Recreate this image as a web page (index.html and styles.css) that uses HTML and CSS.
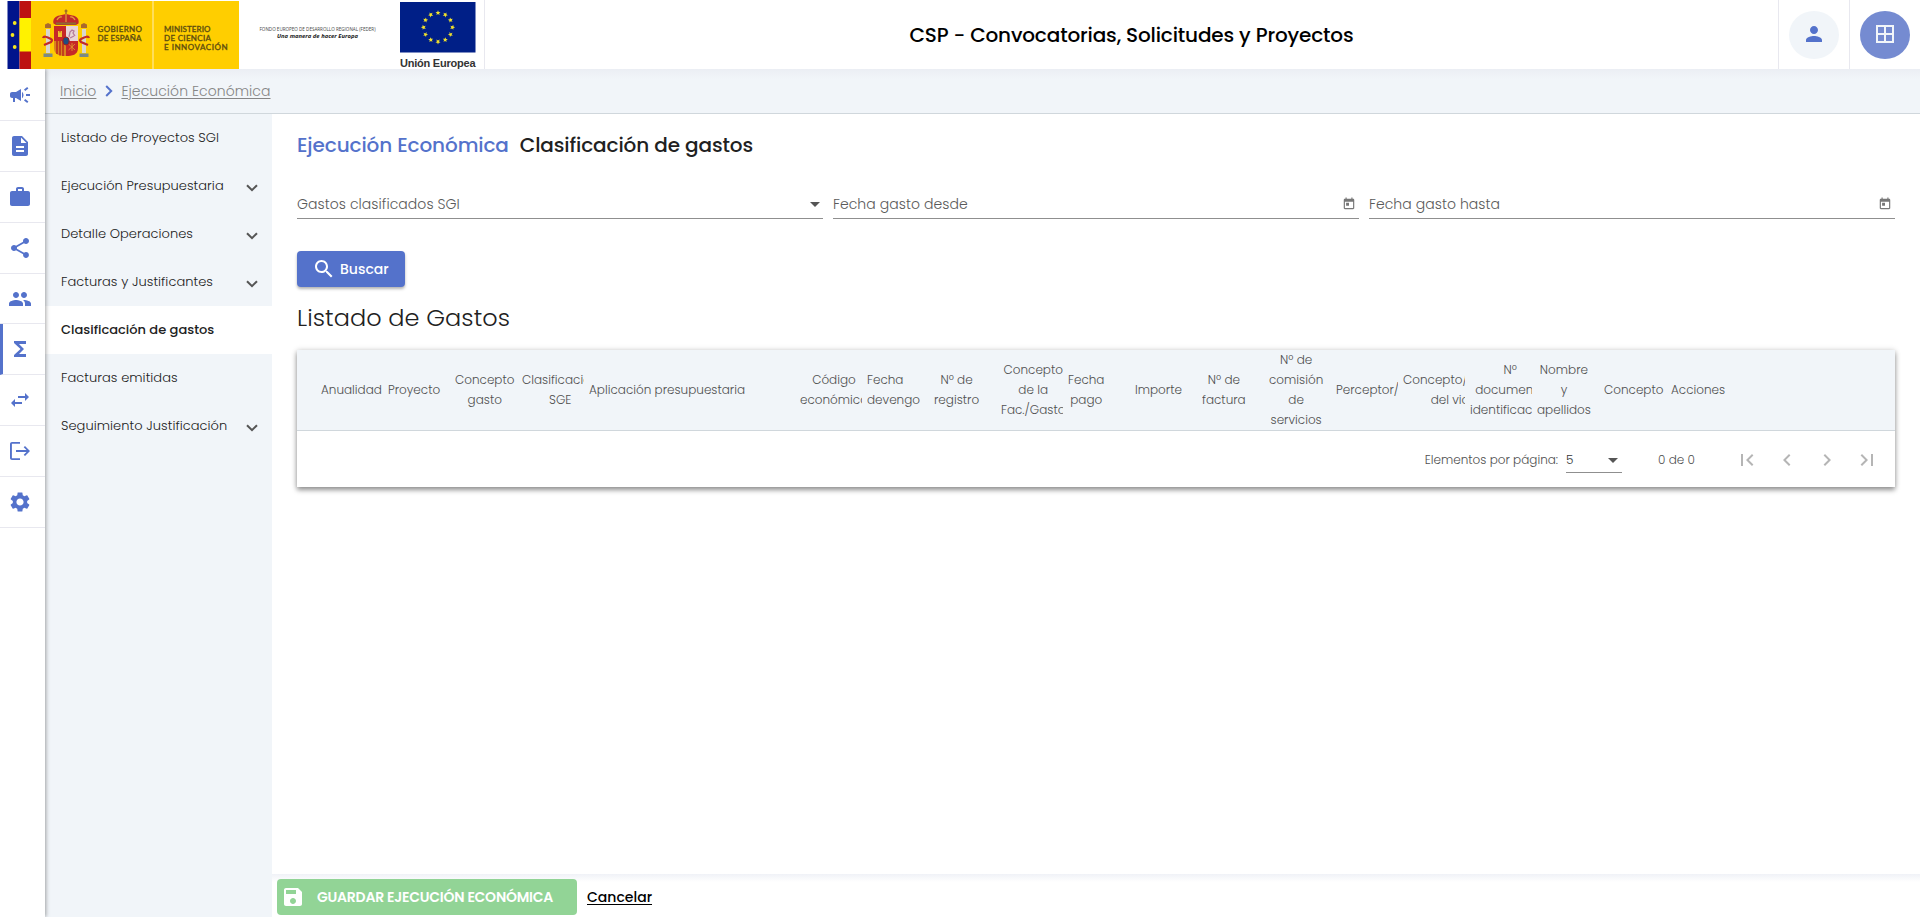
FILE: index.html
```html
<!DOCTYPE html>
<html lang="es">
<head>
<meta charset="utf-8">
<title>CSP - Convocatorias, Solicitudes y Proyectos</title>
<link rel="stylesheet" href="styles.css">
</head>
<body>
<header class="topbar">
  <div class="logos">
    <svg class="logo-strip" width="484" height="70" viewBox="0 0 484 70">
      <rect x="7.500" y="1" width="12" height="68" fill="#00148c"/>
      <rect x="19.500" y="1" width="12" height="68" fill="#bd1212"/>
      <rect x="19.500" y="18" width="12" height="33.500" fill="#fff200"/>
      <rect x="31" y="1" width="208" height="68" fill="#ffce00"/>
      <rect x="152.300" y="1" width="1.400" height="68" fill="#ffe680"/>
      <g fill="#f5e61e"><circle cx="14.700" cy="23" r="1.900"/><circle cx="12.500" cy="35" r="1.900"/><circle cx="14.700" cy="47" r="1.900"/></g>
      <g>
        <path d="M53.500 23.500c-1-4 1.500-7.500 6-8l6.500-1.500 6.500 1.500c4.500.5 7 4 6 8l-2.500 1.500h-20z" fill="#c22a2a"/>
        <path d="M57 20q2-4 5-3M75 20q-2-4-5-3M66 14v8" stroke="#e2a13b" stroke-width="1.200" fill="none"/>
        <path d="M56 23.500h20" stroke="#8d6a35" stroke-width="2"/>
        <path d="M66 9.500v4.500M64.500 11h3" stroke="#8d5530" stroke-width="1.200"/>
        <path d="M54 26h12v15H54z" fill="#c62828"/><path d="M66 26h12v15H66z" fill="#e8d5d8"/>
        <path d="M54 41h12v15c-6 0-12-1-12-8z" fill="#d8841f"/><path d="M66 41h12v7c0 7-6 8-12 8z" fill="#c62828"/>
        <path d="M57 41v13M60 41v14.500M63 41v15" stroke="#b71c1c" stroke-width="1.300"/>
        <path d="M58 37v-6h1.500v1.500h1V31H62v6z" fill="#f0c02e"/>
        <path d="M69 37l1-5 2-2 2 1-1 2 2 3M70 38l4-2" stroke="#b57a9a" stroke-width="1.300" fill="none"/>
        <path d="M68.500 44l6.500 6M75 44l-6.500 6M72 43v8" stroke="#e0a030" stroke-width=".8"/>
        <ellipse cx="66" cy="41" rx="3.200" ry="4" fill="#1f4d80" stroke="#a02020"/>
        <path d="M46 29h4v24h-4zM82 29h4v24h-4z" fill="#d8d6ce"/>
        <path d="M43.500 53.500h9V57h-9zM79.500 53.500h9V57h-9z" fill="#7b8a86"/>
        <path d="M45 28v-3.500l3-1.500 3 1.500V28zM81 28v-3.500l3-1.500 3 1.500V28z" fill="#a96a2e"/>
        <path d="M43 38q1-3 8 1 2 1 0 3l-7 3M89 38q-1-3-8 1-2 1 0 3l7 3" stroke="#c22a2a" stroke-width="2.200" fill="none"/>
      </g>
      <g class="logo-gov" fill="#5d4d10">
        <text x="97.500" y="31.500" textLength="44.500">GOBIERNO</text>
        <text x="97.500" y="41" textLength="44">DE ESPAÑA</text>
        <text x="164" y="31.500" textLength="46.500">MINISTERIO</text>
        <text x="164" y="41" textLength="47">DE CIENCIA</text>
        <text x="164" y="50" textLength="63.500">E INNOVACIÓN</text>
      </g>
      <text class="logo-feder" x="259.500" y="31" textLength="116" lengthAdjust="spacingAndGlyphs">FONDO EUROPEO DE DESARROLLO REGIONAL (FEDER)</text>
      <text class="logo-motto" x="277" y="38.300" textLength="81" lengthAdjust="spacingAndGlyphs">Una manera de hacer Europa</text>
      <rect x="400" y="2" width="75.500" height="50.500" fill="#001f87"/>
      <g fill="#f3e32b"><path id="st" d="M438 10.200l.7 1.700 1.800.1-1.400 1.200.5 1.800-1.600-1-1.600 1 .5-1.800-1.400-1.200 1.800-.1z"/>
      <use href="#st" transform="rotate(30 438 27.300)"/><use href="#st" transform="rotate(60 438 27.300)"/><use href="#st" transform="rotate(90 438 27.300)"/><use href="#st" transform="rotate(120 438 27.300)"/><use href="#st" transform="rotate(150 438 27.300)"/><use href="#st" transform="rotate(180 438 27.300)"/><use href="#st" transform="rotate(210 438 27.300)"/><use href="#st" transform="rotate(240 438 27.300)"/><use href="#st" transform="rotate(270 438 27.300)"/><use href="#st" transform="rotate(300 438 27.300)"/><use href="#st" transform="rotate(330 438 27.300)"/></g>
      <text class="logo-ue" x="400" y="66.500" textLength="75.500">Unión Europea</text>
    </svg>
  </div>
  <h1 class="app-title">CSP - Convocatorias, Solicitudes y Proyectos</h1>
  <div class="top-cell"><span class="round round-user"><svg class="i" viewBox="0 0 24 24"><path d="M12 12c2.210 0 4-1.790 4-4s-1.790-4-4-4-4 1.790-4 4 1.790 4 4 4zm0 2c-2.670 0-8 1.340-8 4v2h16v-2c0-2.660-5.330-4-8-4z"/></svg></span></div>
  <div class="top-cell"><span class="round round-apps"><svg class="i" viewBox="0 0 24 24"><path d="M3 3v18h18V3H3zm8 16H5v-6h6v6zm0-8H5V5h6v6zm8 8h-6v-6h6v6zm0-8h-6V5h6v6z"/></svg></span></div>
</header>
<div class="shell">
  <nav class="rail">
    <a><svg class="i" viewBox="0 0 24 24"><path d="M18 11v2h4v-2h-4zm-2 6.610c.96.710 2.210 1.650 3.200 2.390.4-.53.8-1.070 1.200-1.600-.99-.74-2.240-1.680-3.200-2.400-.4.540-.8 1.080-1.200 1.610zM20.400 5.600c-.4-.53-.8-1.070-1.200-1.600-.99.740-2.240 1.680-3.200 2.400.4.530.8 1.070 1.200 1.600.96-.72 2.210-1.650 3.200-2.400zM4 9c-1.100 0-2 .9-2 2v2c0 1.100.9 2 2 2h1v4h2v-4h1l5 3V6L8 9H4zm11.500 3c0-1.330-.58-2.530-1.500-3.350v6.690c.92-.81 1.500-2.010 1.500-3.340z"/></svg></a>
    <a><svg class="i" viewBox="0 0 24 24"><path d="M14 2H6c-1.100 0-1.990.9-1.990 2L4 20c0 1.100.89 2 1.990 2H18c1.100 0 2-.9 2-2V8l-6-6zm2 16H8v-2h8v2zm0-4H8v-2h8v2zm-3-5V3.500L18.500 9H13z"/></svg></a>
    <a><svg class="i" viewBox="0 0 24 24"><path d="M20 6h-4V4c0-1.110-.89-2-2-2h-4c-1.110 0-2 .89-2 2v2H4c-1.110 0-1.990.89-1.990 2L2 19c0 1.110.89 2 2 2h16c1.110 0 2-.89 2-2V8c0-1.110-.89-2-2-2zm-6 0h-4V4h4v2z"/></svg></a>
    <a><svg class="i" viewBox="0 0 24 24"><path d="M18 16.080c-.76 0-1.440.3-1.960.77L8.910 12.700c.05-.23.090-.46.090-.7s-.04-.47-.09-.7l7.050-4.110c.54.5 1.250.81 2.040.81 1.660 0 3-1.340 3-3s-1.340-3-3-3-3 1.340-3 3c0 .24.040.47.090.7L8.040 9.810C7.500 9.310 6.790 9 6 9c-1.660 0-3 1.340-3 3s1.340 3 3 3c.79 0 1.500-.31 2.040-.81l7.120 4.160c-.05.210-.08.430-.08.650 0 1.610 1.310 2.920 2.920 2.920s2.920-1.310 2.920-2.920-1.310-2.920-2.920-2.920z"/></svg></a>
    <a><svg class="i" viewBox="0 0 24 24"><path d="M16 11c1.660 0 2.990-1.340 2.990-3S17.660 5 16 5s-3 1.340-3 3 1.340 3 3 3zM8 11c1.660 0 2.990-1.340 2.990-3S9.660 5 8 5 5 6.340 5 8s1.340 3 3 3zM8 13c-2.330 0-7 1.170-7 3.500V19h14v-2.500C15 14.170 10.330 13 8 13zM16 13c-.29 0-.62.020-.97.050C16.190 13.890 17 15.020 17 16.500V19h6v-2.500c0-2.330-4.670-3.500-7-3.500z"/></svg></a>
    <a class="on"><svg class="i" viewBox="0 0 24 24"><path d="M18 4H6v2l6.500 6L6 18v2h12v-3h-7l5-5-5-5h7z"/></svg></a>
    <a><svg class="i" viewBox="0 0 24 24"><path d="M6.990 11L3 15l3.990 4v-3H14v-2H6.990v-3zM21 9l-3.990-4v3H10v2h7.010v3L21 9z"/></svg></a>
    <a><svg class="i" viewBox="0 0 24 24"><path d="M12 3v1.800H3.900v14.400H12V21H4c-1.100 0-2-.9-2-2V5c0-1.100.9-2 2-2zM17 7l-1.300 1.300 2.800 2.800H8v1.800h10.500l-2.800 2.800L17 17l5-5z"/></svg></a>
    <a><svg class="i" viewBox="0 0 24 24"><path d="M19.140 12.940c.04-.3.060-.61.060-.94 0-.32-.02-.64-.07-.94l2.030-1.580c.18-.14.230-.41.120-.61l-1.920-3.320c-.12-.22-.37-.29-.59-.22l-2.390.96c-.5-.38-1.030-.7-1.620-.94l-.36-2.540c-.04-.24-.24-.41-.48-.41h-3.840c-.24 0-.43.170-.47.410l-.36 2.540c-.59.240-1.130.570-1.620.94l-2.390-.96c-.22-.08-.47 0-.59.220L2.740 8.870c-.12.210-.08.470.12.610l2.030 1.580c-.05.300-.09.630-.09.940s.02.640.07.940l-2.030 1.580c-.18.140-.23.410-.12.610l1.920 3.320c.12.220.37.290.59.220l2.390-.96c.5.380 1.030.7 1.620.94l.36 2.540c.05.240.24.410.48.410h3.840c.24 0 .44-.17.470-.41l.36-2.540c.59-.24 1.130-.56 1.620-.94l2.390.96c.22.080.47 0 .59-.22l1.920-3.320c.12-.22.070-.47-.12-.61l-2.010-1.580zM12 15.600c-1.980 0-3.600-1.620-3.600-3.600s1.620-3.600 3.600-3.600 3.600 1.620 3.600 3.600-1.620 3.600-3.600 3.600z"/></svg></a>
  </nav>
  <div class="page">
    <div class="crumbs"><a>Inicio</a><svg class="crumb-sep" viewBox="0 0 8 12"><path d="M1.200 1l5 5-5 5"/></svg><a>Ejecución Económica</a></div>
    <div class="body">
      <aside class="side">
        <a>Listado de Proyectos SGI</a>
        <a>Ejecución Presupuestaria<svg class="chev" viewBox="0 0 12 8"><path d="M1 1.200l5 5 5-5"/></svg></a>
        <a>Detalle Operaciones<svg class="chev" viewBox="0 0 12 8"><path d="M1 1.200l5 5 5-5"/></svg></a>
        <a>Facturas y Justificantes<svg class="chev" viewBox="0 0 12 8"><path d="M1 1.200l5 5 5-5"/></svg></a>
        <a class="on">Clasificación de gastos</a>
        <a>Facturas emitidas</a>
        <a>Seguimiento Justificación<svg class="chev" viewBox="0 0 12 8"><path d="M1 1.200l5 5 5-5"/></svg></a>
      </aside>
      <main class="main">
        <section class="content">
          <h2 class="title"><span class="accent">Ejecución Económica</span><span>Clasificación de gastos</span></h2>
          <div class="filters">
            <div class="field"><span>Gastos clasificados SGI</span><i class="tri"></i></div>
            <div class="field"><span>Fecha gasto desde</span><svg class="cal" viewBox="0 0 24 24"><path d="M19 3h-1V1h-2v2H8V1H6v2H5c-1.110 0-1.990.9-1.990 2L3 19c0 1.100.89 2 2 2h14c1.100 0 2-.9 2-2V5c0-1.100-.9-2-2-2zm0 16H5V8h14v11zM7 10h5v5H7z"/></svg></div>
            <div class="field"><span>Fecha gasto hasta</span><svg class="cal" viewBox="0 0 24 24"><path d="M19 3h-1V1h-2v2H8V1H6v2H5c-1.110 0-1.990.9-1.990 2L3 19c0 1.100.89 2 2 2h14c1.100 0 2-.9 2-2V5c0-1.100-.9-2-2-2zm0 16H5V8h14v11zM7 10h5v5H7z"/></svg></div>
          </div>
          <button class="search"><svg class="i" viewBox="0 0 24 24"><path d="M15.500 14h-.79l-.28-.27C15.410 12.590 16 11.110 16 9.500 16 5.910 13.090 3 9.500 3S3 5.910 3 9.500 5.910 16 9.500 16c1.610 0 3.090-.59 4.230-1.570l.27.280v.79l5 4.990L20.490 19l-4.990-5zm-6 0C7.010 14 5 11.990 5 9.500S7.010 5 9.500 5 14 7.010 14 9.500 11.990 14 9.500 14z"/></svg>Buscar</button>
          <h3 class="list-title">Listado de Gastos</h3>
          <div class="card">
            <div class="thead">
              <div class="th"><span>Anualidad</span></div>
              <div class="th"><span>Proyecto</span></div>
              <div class="th"><span>Concepto<br>gasto</span></div>
              <div class="th"><span>Clasificación<br>SGE</span></div>
              <div class="th wide"><span>Aplicación presupuestaria</span></div>
              <div class="th"><span>Código<br>económico</span></div>
              <div class="th left"><span>Fecha<br>devengo</span></div>
              <div class="th"><span>Nº de<br>registro</span></div>
              <div class="th"><span>Concepto<br>de la<br>Fac./Gasto</span></div>
              <div class="th"><span>Fecha<br>pago</span></div>
              <div class="th"><span>Importe</span></div>
              <div class="th"><span>Nº de<br>factura</span></div>
              <div class="th"><span>Nº de<br>comisión<br>de<br>servicios</span></div>
              <div class="th"><span>Perceptor/</span></div>
              <div class="th"><span>Concepto/Objeto<br>del viaje</span></div>
              <div class="th"><span>Nº<br>documento<br>identificación</span></div>
              <div class="th"><span>Nombre<br>y<br>apellidos</span></div>
              <div class="th"><span>Concepto</span></div>
              <div class="th"><span>Acciones</span></div>
            </div>
            <div class="pager">
              <span>Elementos por página:</span>
              <span class="size">5<i class="tri"></i></span>
              <span class="range">0 de 0</span>
              <svg class="pg" viewBox="0 0 24 24"><path d="M18.410 16.590L13.820 12l4.590-4.590L17 6l-6 6 6 6zM6 6h2v12H6z"/></svg>
              <svg class="pg" viewBox="0 0 24 24"><path d="M15.410 7.410L14 6l-6 6 6 6 1.410-1.410L10.830 12z"/></svg>
              <svg class="pg" viewBox="0 0 24 24"><path d="M10 6L8.590 7.410 13.170 12l-4.580 4.590L10 18l6-6z"/></svg>
              <svg class="pg" viewBox="0 0 24 24"><path d="M5.590 7.410L10.180 12l-4.590 4.590L7 18l6-6-6-6zM16 6h2v12h-2z"/></svg>
            </div>
          </div>
        </section>
        <footer class="actions">
          <button class="save"><svg class="i" viewBox="0 0 24 24"><path d="M17 3H5c-1.110 0-2 .9-2 2v14c0 1.100.89 2 2 2h14c1.100 0 2-.9 2-2V7l-4-4zm-5 16c-1.660 0-3-1.340-3-3s1.340-3 3-3 3 1.340 3 3-1.340 3-3 3zm3-10H5V5h10v4z"/></svg>GUARDAR EJECUCIÓN ECONÓMICA</button>
          <a class="cancel">Cancelar</a>
        </footer>
      </main>
    </div>
  </div>
</div>
</body>
</html>
```

FILE: styles.css
```css
* { box-sizing: border-box; }
body {
  margin: 0;
  height: 917px;
  display: flex;
  flex-direction: column;
  overflow: hidden;
  background: #fff;
  color: #212121;
  font-family: Poppins, Inter, "Open Sans", sans-serif;
  font-feature-settings: "cv11";
  font-weight: 300;
}
h1, h2, h3 { margin: 0; }
a, button { color: inherit; font-family: inherit; font-feature-settings: inherit; }
svg { display: block; flex: none; }
.i { width: 24px; height: 24px; fill: currentColor; }

.topbar { height: 69px; flex: none; display: flex; align-items: stretch; position: relative; z-index: 3; background: #fff; }
.logos { width: 485px; border-right: 1px solid #e8e8ef; }
.logo-gov text { font: 500 8px Lato, sans-serif; stroke: #5d4d10; stroke-width: .3; }
.logo-feder { font: 400 4.800px "Open Sans", sans-serif; fill: #444; }
.logo-motto { font: italic 700 6px "Open Sans", sans-serif; fill: #222; }
.logo-ue { font: 700 11px "Liberation Sans", Arial, sans-serif; fill: #333; }
.app-title { flex: 1; display: flex; align-items: center; justify-content: center; font-size: 20px; font-weight: 500; letter-spacing: -.15px; color: #000; }
.top-cell { width: 71px; border-left: 1px solid #e8e8ef; display: flex; align-items: center; justify-content: center; }
.round { width: 50px; height: 48px; border-radius: 50%; display: flex; align-items: center; justify-content: center; padding-bottom: 2px; }
.round-user { background: #f1f5f9; color: #5472cb; }
.round-apps { background: #758bd1; color: #f1f5f9; }

.shell { flex: 1; display: flex; min-height: 0; }
.rail { width: 45px; flex: none; padding-top: 1px; background: #fff; position: relative; z-index: 2; box-shadow: 1px 0 4px rgba(0,0,0,.35); color: #5472cb; }
.rail a { height: 50.900px; display: flex; align-items: center; padding-left: 8px; border-bottom: 1px solid #e8e8ef; }
.rail a.on { border-left: 3px solid #5472cb; padding-left: 5px; }
.page { flex: 1; display: flex; flex-direction: column; min-width: 0; }
.crumbs { height: 45px; flex: none; display: flex; align-items: center; padding-left: 15px; border-bottom: 1px solid #d0d7dc; background: linear-gradient(#ebeef4, #f1f5f9 10px); color: #858585; font-size: 14px; letter-spacing: .06px; }
.crumbs a { text-decoration: underline; text-underline-offset: 2px; }
.crumb-sep { width: 8px; height: 12px; margin: 0 8px 0 9px; fill: none; stroke: #5472cb; stroke-width: 2; }
.body { flex: 1; display: flex; min-height: 0; }
.side { width: 227px; flex: none; background: #f1f5f9; font-size: 13px; letter-spacing: .05px; }
.side a { height: 48px; display: flex; align-items: center; justify-content: space-between; padding: 0 14px 1px 16px; }
.side a.on { background: #fff; font-weight: 500; letter-spacing: 0; }
.chev { width: 12px; height: 8px; margin-top: 4px; fill: none; stroke: #555; stroke-width: 2; }

.main { flex: 1; display: flex; flex-direction: column; min-width: 0; }
.content { flex: 1; padding: 18px 25px 0; }
.title { height: 26px; line-height: 26px; display: flex; gap: 11px; font-size: 20px; font-weight: 500; letter-spacing: -.11px; }
.accent { color: #5472cb; }
.filters { display: grid; grid-template-columns: repeat(3, 1fr); gap: 10px; margin-top: 32px; }
.field { height: 29px; display: flex; align-items: center; justify-content: space-between; padding-right: 3px; border-bottom: 1px solid #8f8f8f; color: #5a5a5a; font-size: 14px; letter-spacing: .06px; }
.tri { border: 5px solid transparent; border-top-color: #555; border-bottom: 0; }
.cal { width: 14px; height: 14px; fill: #777; }
.search { width: 108px; height: 36px; margin-top: 32px; padding: 0 0 0 15px; display: flex; align-items: center; gap: 4px; border: 0; border-radius: 4px; background: #5472cb; color: #fff; font-size: 14px; font-weight: 500; box-shadow: 0 2px 3px rgba(0,0,0,.3); }
.list-title { height: 32px; line-height: 32px; margin-top: 15px; font-size: 24px; font-weight: 300; letter-spacing: .07px; }
.card { margin-top: 16px; background: #fff; box-shadow: 0 3px 5px rgba(0,0,0,.4), 0 0 6px rgba(0,0,0,.14); }
.thead { height: 81px; display: flex; align-items: center; padding-left: 24px; border-bottom: 1px solid #d0d7dc; background: #f1f5f9; color: #505050; font-size: 12px; line-height: 20px; }
.th { width: 62px; flex: none; margin-right: 5px; overflow: hidden; }
.th.wide { width: 206px; }
.th span { display: block; width: max-content; text-align: center; }
.th.left span { text-align: left; }
.pager { height: 56px; display: flex; align-items: center; justify-content: flex-end; padding: 1px 16px 0 0; color: #505050; font-size: 12px; }
.size { width: 56px; height: 25px; margin: 2px 36px 0 8px; display: flex; align-items: center; justify-content: space-between; padding-right: 4px; border-bottom: 1px solid #8f8f8f; color: #333; }
.range { margin-right: 24px; }
.pg { width: 24px; height: 24px; margin-left: 16px; fill: #b5b5b5; }

.actions { height: 43px; flex: none; display: flex; align-items: center; padding: 3px 5px 0; background: linear-gradient(#f0f2f7, #fff 8px); }
.save { width: 300px; height: 36px; padding: 0 0 0 4px; display: flex; align-items: center; gap: 12px; border: 0; border-radius: 4px; background: #92d496; color: #fff; font-size: 14px; font-weight: 600; letter-spacing: -.23px; }
.cancel { margin-left: 10px; color: #000; font-size: 14px; font-weight: 500; text-decoration: underline; text-underline-offset: 2px; }
```
